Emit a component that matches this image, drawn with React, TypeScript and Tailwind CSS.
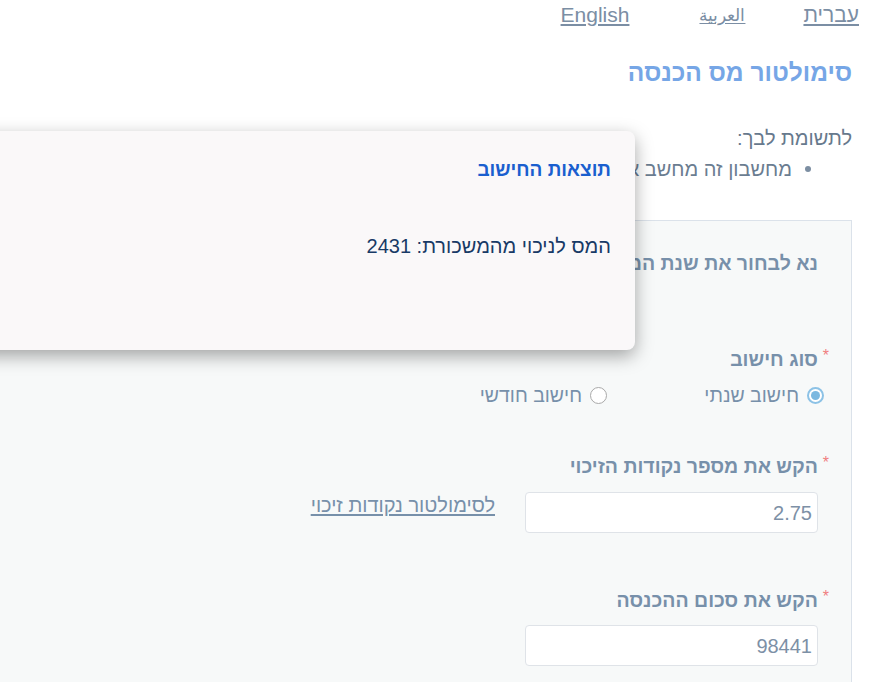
import React from "react";

const Label: React.FC<{ children: React.ReactNode; className?: string }> = ({ children, className }) => (
  <div className={`relative h-[24px] text-[19.5px] leading-[24px] font-bold text-[#7790aa] ${className ?? ""}`}>
    <span className="absolute right-[-11px] top-[-3px] text-[16px] text-[#f07f7f] font-normal">*</span>
    {children}
  </div>
);

const Radio: React.FC<{ checked?: boolean; label: string; className?: string }> = ({ checked, label, className }) => (
  <label className={`flex items-center gap-[8px] h-[24px] ${className ?? ""}`}>
    {checked ? (
      <span className="w-[17px] h-[17px] rounded-full border-2 border-[#8cc2e6] bg-white flex items-center justify-center">
        <span className="w-[9px] h-[9px] rounded-full bg-[#7bb8e0]" />
      </span>
    ) : (
      <span className="w-[17px] h-[17px] rounded-full border border-[#a9a9a9] bg-white" />
    )}
    <span className="text-[19.5px] leading-[24px] text-[#7790aa]">{label}</span>
  </label>
);

export default function App() {
  return (
    <div
      dir="rtl"
      className="relative w-full h-[682px] overflow-hidden bg-white font-['Liberation_Sans',Arial,sans-serif]"
    >
      {/* language switch */}
      <div className="flex h-[30px] items-center pr-[16px] text-[21px] leading-[30px] text-[#7b8ea4]">
        <a className="underline underline-offset-2">עברית</a>
        <a className="mr-[58px] underline underline-offset-2 text-[17px] font-['DejaVu_Serif',serif]">العربية</a>
        <a className="mr-[70px] underline underline-offset-2">English</a>
      </div>

      <div className="pr-[23px]">
        <h1 className="mt-[27px] text-[24.5px] leading-[32px] font-bold text-[#76a6e6]">סימולטור מס הכנסה</h1>

        <p className="mt-[37px] text-[20px] leading-[24px] text-[#67798d]">לתשומת לבך:</p>
        <div className="mt-[7px] flex items-center h-[24px] relative text-[20px] leading-[24px] text-[#6b7d91]">
          <span className="absolute right-[41px] top-[9px] w-[6px] h-[6px] rounded-full bg-[#7c8ea2]" />
          <span className="mr-[60px] whitespace-nowrap">מחשבון זה מחשב את המס המשוער בלבד</span>
        </div>

        {/* form panel */}
        <div className="mt-[39px] w-[1000px] h-[600px] bg-[#f7f9f9] border border-[#dbe2ea] pr-[33px] pt-[30px]">
          <h2 className="text-[19.5px] leading-[24px] font-bold text-[#7790aa] whitespace-nowrap">נא לבחור את שנת המס לחישוב</h2>

          <Label className="mt-[72px]">סוג חישוב</Label>
          <div className="mt-[12px] flex mr-[-6px]">
            <Radio checked label="חישוב שנתי" className="w-[217px]" />
            <Radio label="חישוב חודשי" />
          </div>

          <Label className="mt-[47px]">הקש את מספר נקודות הזיכוי</Label>
          <div className="mt-[14px] flex items-start gap-[30px]">
            <div className="w-[293px] h-[41px] bg-white border border-[#dfe3e8] rounded-[4px] pr-[5px] flex items-center text-[20px] text-[#7d90a6]">
              2.75
            </div>
            <a className="mt-[1px] text-[20px] leading-[24px] text-[#7790aa] underline underline-offset-2">
              לסימולטור נקודות זיכוי
            </a>
          </div>

          <Label className="mt-[55px]">הקש את סכום ההכנסה</Label>
          <div className="mt-[13px] w-[293px] h-[41px] bg-white border border-[#dfe3e8] rounded-[4px] pr-[5px] flex items-center text-[20px] text-[#7d90a6]">
            98441
          </div>
        </div>
      </div>

      {/* results popup */}
      <div className="absolute top-[131px] right-[240px] w-[700px] h-[219px] rounded-[8px] bg-[#faf8f9] shadow-[0_6px_18px_rgba(0,0,0,0.35)] pr-[24px] pt-[27px]">
        <h3 className="text-[19px] leading-[24px] font-bold text-[#1a5fcf]">תוצאות החישוב</h3>
        <p className="mt-[52px] text-[20px] leading-[24px] text-[#183a66]">המס לניכוי מהמשכורת: 2431</p>
      </div>
    </div>
  );
}
